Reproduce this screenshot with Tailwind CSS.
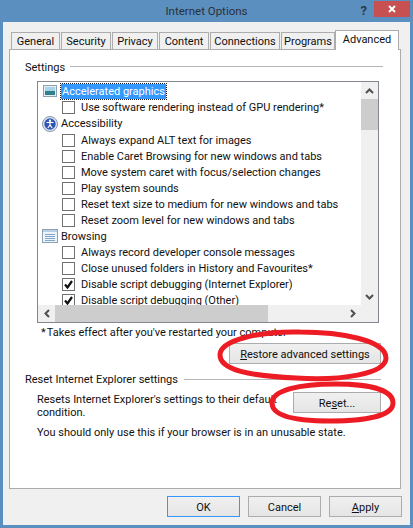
<!DOCTYPE html>
<html lang="en">
<head>
  <meta charset="UTF-8" />
  <title>Internet Options</title>
  <script src="https://cdn.jsdelivr.net/npm/@tailwindcss/browser@4"></script>
</head>
<body class="w-[413px] h-[528px] overflow-hidden bg-[#5b8fc0] font-['Roboto',sans-serif] text-[11px] text-[#111] relative">
  <!-- Title bar -->
  <div class="h-[22px] flex items-start relative">
    <div class="flex-1 text-center text-[#2a2f36] text-[11.5px] pt-[3px]">Internet Options</div>
    <div class="absolute right-[46px] top-[1px] text-[13px] font-bold text-[#2b3a4a]">?</div>
    <div class="absolute right-[3px] top-[1px] w-[36px] h-[16px] bg-[#c75050] flex items-center justify-center">
      <svg width="10" height="10" viewBox="0 0 10 10"><path d="M2 2L8 8M8 2L2 8" stroke="#fff" stroke-width="2"/></svg>
    </div>
  </div>

  <!-- Dialog body -->
  <div class="ml-[3px] w-[407px] h-[503px] bg-[#f0f0f0] pl-[6px] pt-[10px]">
    <!-- Tabs -->
    <div class="flex h-[17px] pl-[2px] items-end relative z-10">
      <div class="h-[17px] w-[49px] mr-px border border-b-0 border-[#acacac] bg-[#f0f0f0] text-center leading-[18px]">General</div>
      <div class="h-[17px] w-[50px] mr-px border border-b-0 border-[#acacac] bg-[#f0f0f0] text-center leading-[18px]">Security</div>
      <div class="h-[17px] w-[46px] mr-px border border-b-0 border-[#acacac] bg-[#f0f0f0] text-center leading-[18px]">Privacy</div>
      <div class="h-[17px] w-[50px] mr-px border border-b-0 border-[#acacac] bg-[#f0f0f0] text-center leading-[18px]">Content</div>
      <div class="h-[17px] w-[70px] mr-px border border-b-0 border-[#acacac] bg-[#f0f0f0] text-center leading-[18px]">Connections</div>
      <div class="h-[17px] w-[54px] border border-b-0 border-[#acacac] bg-[#f0f0f0] text-center leading-[18px]">Programs</div>
      <div class="h-[20px] w-[64px] border border-b-0 border-[#acacac] bg-white text-center leading-[17px] -mb-px">Advanced</div>
    </div>

    <!-- Tab panel -->
    <div class="w-[392px] h-[440px] border border-[#acacac] bg-white relative">
      <div class="flex items-center pl-[15px] pr-[17px] pt-[8px] h-[25px] mb-px">
        <span class="pt-[4px]">Settings</span>
        <div class="flex-1 h-px bg-[#b5b5b5] ml-[5px]"></div>
      </div>

      <!-- Settings list -->
      <div class="ml-[27px] mt-[6px] w-[342px] h-[242px] border border-[#828790] relative overflow-hidden">
        <div class="pl-[5px] pt-px flex flex-col">
          <div class="h-[16px] flex items-center">
            <svg class="w-[14px] h-[14px] mr-[4px]" viewBox="0 0 14 14"><rect x=".5" y="1.5" width="13" height="11" fill="#e8eef4" stroke="#8ea1b3"/><rect x="2" y="3" width="10" height="8" fill="#2f7f8c"/><rect x="2" y="3" width="10" height="4" fill="#a9d3ea"/></svg>
            <span class="bg-[#3399ff] text-white outline-1 outline-dotted outline-[#1a1a1a] px-px leading-[15px]">Accelerated graphics</span>
          </div>
          <div class="h-[16px] flex items-center pl-[19px] gap-[6px]"><span class="w-[13px] h-[13px] border border-[#707070] bg-white shrink-0"></span><span class="pt-[2px] whitespace-nowrap">Use software rendering instead of GPU rendering*</span></div>
          <div class="h-[17px] flex items-center">
            <svg class="w-[16px] h-[16px] -ml-px mr-[3px]" viewBox="0 0 16 16"><circle cx="8" cy="8" r="7.5" fill="#dfe6f2" stroke="#8a94a8"/><circle cx="8" cy="8" r="5.7" fill="#2f55b5"/><circle cx="8" cy="4.8" r="1.2" fill="#fff"/><path d="M4.5 6.5L11.5 6.5M8 6.5L8 9M8 9L5.8 12M8 9L10.2 12" stroke="#fff" stroke-width="1.2" fill="none"/></svg>
            <span class="pt-[2px]">Accessibility</span>
          </div>
          <div class="h-[16px] flex items-center pl-[19px] gap-[6px]"><span class="w-[13px] h-[13px] border border-[#707070] bg-white shrink-0"></span><span class="pt-[2px] whitespace-nowrap">Always expand ALT text for images</span></div>
          <div class="h-[16px] flex items-center pl-[19px] gap-[6px]"><span class="w-[13px] h-[13px] border border-[#707070] bg-white shrink-0"></span><span class="pt-[2px] whitespace-nowrap">Enable Caret Browsing for new windows and tabs</span></div>
          <div class="h-[16px] flex items-center pl-[19px] gap-[6px]"><span class="w-[13px] h-[13px] border border-[#707070] bg-white shrink-0"></span><span class="pt-[2px] whitespace-nowrap">Move system caret with focus/selection changes</span></div>
          <div class="h-[16px] flex items-center pl-[19px] gap-[6px]"><span class="w-[13px] h-[13px] border border-[#707070] bg-white shrink-0"></span><span class="pt-[2px] whitespace-nowrap">Play system sounds</span></div>
          <div class="h-[16px] flex items-center pl-[19px] gap-[6px]"><span class="w-[13px] h-[13px] border border-[#707070] bg-white shrink-0"></span><span class="pt-[2px] whitespace-nowrap">Reset text size to medium for new windows and tabs</span></div>
          <div class="h-[16px] flex items-center pl-[19px] gap-[6px]"><span class="w-[13px] h-[13px] border border-[#707070] bg-white shrink-0"></span><span class="pt-[2px] whitespace-nowrap">Reset zoom level for new windows and tabs</span></div>
          <div class="h-[16px] flex items-center">
            <svg class="w-[16px] h-[14px] -ml-px mr-[3px]" viewBox="0 0 16 14"><rect x=".5" y=".5" width="15" height="13" fill="#eef3f8" stroke="#8ea1b3"/><rect x="1" y="1" width="14" height="2" fill="#b9cfe6"/><path d="M3 5.5H13M3 7.5H13M3 9.5H13M3 11.5H13" stroke="#7fa6cc"/></svg>
            <span class="pt-[2px]">Browsing</span>
          </div>
          <div class="h-[16px] flex items-center pl-[19px] gap-[6px]"><span class="w-[13px] h-[13px] border border-[#707070] bg-white shrink-0"></span><span class="pt-[2px] whitespace-nowrap">Always record developer console messages</span></div>
          <div class="h-[16px] flex items-center pl-[19px] gap-[6px]"><span class="w-[13px] h-[13px] border border-[#707070] bg-white shrink-0"></span><span class="pt-[2px] whitespace-nowrap">Close unused folders in History and Favourites*</span></div>
          <div class="h-[16px] flex items-center pl-[19px] gap-[6px]"><span class="w-[13px] h-[13px] border border-[#707070] bg-white shrink-0 flex items-center justify-center"><svg width="9" height="9" viewBox="0 0 9 9"><path d="M1 4.5L3.5 7.5L8 1" stroke="#111" stroke-width="2.2" fill="none"/></svg></span><span class="pt-[2px] whitespace-nowrap">Disable script debugging (Internet Explorer)</span></div>
          <div class="h-[16px] flex items-center pl-[19px] gap-[6px]"><span class="w-[13px] h-[13px] border border-[#707070] bg-white shrink-0 flex items-center justify-center"><svg width="9" height="9" viewBox="0 0 9 9"><path d="M1 4.5L3.5 7.5L8 1" stroke="#111" stroke-width="2.2" fill="none"/></svg></span><span class="pt-[2px] whitespace-nowrap">Disable script debugging (Other)</span></div>
        </div>

        <!-- Vertical scrollbar -->
        <div class="absolute right-0 top-0 w-[17px] h-[223px] bg-[#f0f0f0] flex flex-col items-center">
          <div class="h-[17px] flex items-center"><svg width="9" height="6" viewBox="0 0 9 6"><path d="M1 5L4.5 1.5L8 5" stroke="#505050" stroke-width="2" fill="none"/></svg></div>
          <div class="w-[17px] h-[31px] bg-[#cdcdcd]"></div>
          <div class="flex-1"></div>
          <div class="h-[17px] flex items-center"><svg width="9" height="6" viewBox="0 0 9 6"><path d="M1 1L4.5 4.5L8 1" stroke="#505050" stroke-width="2" fill="none"/></svg></div>
        </div>
        <!-- Horizontal scrollbar -->
        <div class="absolute left-0 bottom-0 w-full h-[17px] bg-[#f0f0f0] flex items-center">
          <div class="w-[17px] flex justify-center"><svg width="6" height="9" viewBox="0 0 6 9"><path d="M5 1L1.5 4.5L5 8" stroke="#505050" stroke-width="2" fill="none"/></svg></div>
          <div class="w-[213px] h-[17px] bg-[#cdcdcd]"></div>
          <div class="flex-1"></div>
          <div class="w-[17px] flex justify-center mr-[17px]"><svg width="6" height="9" viewBox="0 0 6 9"><path d="M1 1L4.5 4.5L1 8" stroke="#505050" stroke-width="2" fill="none"/></svg></div>
        </div>
      </div>

      <div class="pl-[31px] mt-[2px] leading-[16px]"><span class="mr-px">*</span>Takes effect after you've restarted your computer</div>

      <div class="flex justify-end pr-[19px] mt-[2px]">
        <button class="w-[152px] h-[21px] pt-[2px] border border-[#acacac] bg-gradient-to-b from-[#f0f0f0] to-[#e5e5e5] text-center leading-[16px]"><u>R</u>estore advanced settings</button>
      </div>

      <div class="flex items-center pl-[15px] pr-[19px] mt-[7px] h-[16px]">
        <span class="pt-[3px]">Reset Internet Explorer settings</span>
        <div class="flex-1 h-px bg-[#b5b5b5] ml-[6px]"></div>
      </div>

      <div class="flex pl-[27px] pr-[19px] mt-[5px]">
        <p class="w-[246px] leading-[13px] pt-px">Resets Internet Explorer's settings to their default condition.</p>
        <button class="ml-auto w-[88px] h-[21px] pt-[2px] border border-[#acacac] bg-gradient-to-b from-[#f0f0f0] to-[#e5e5e5] leading-[16px]">Re<u>s</u>et...</button>
      </div>
      <p class="pl-[27px] mt-[6px] leading-[16px]">You should only use this if your browser is in an unusable state.</p>
    </div>

    <!-- Dialog buttons -->
    <div class="flex justify-end gap-[8px] pr-[8px] mt-[7px]">
      <button class="w-[73px] h-[21px] pt-[2px] border border-[#3399ff] bg-gradient-to-b from-[#f0f0f0] to-[#e5e5e5] leading-[16px]">OK</button>
      <button class="w-[73px] h-[21px] pt-[2px] border border-[#acacac] bg-gradient-to-b from-[#f0f0f0] to-[#e5e5e5] leading-[16px]">Cancel</button>
      <button class="w-[73px] h-[21px] pt-[2px] border border-[#acacac] bg-gradient-to-b from-[#f0f0f0] to-[#e5e5e5] leading-[16px]"><u>A</u>pply</button>
    </div>
  </div>

  <!-- Red hand-drawn circles over the dialog -->
  <svg class="absolute left-0 top-0 pointer-events-none" width="413" height="528" viewBox="0 0 413 528" fill="none" stroke="#ed1c24" stroke-width="5">
    <path d="M300 332C340 332 386 340 386 358C386 374 340 381 296 378C250 376 220 370 220 355C220 340 260 331 300 332Z"/>
    <path d="M335 384C370 384 393 390 393 403C393 416 365 421 330 421C295 421 272 416 272 403C272 390 300 384 335 384Z"/>
  </svg>
</body>
</html>
